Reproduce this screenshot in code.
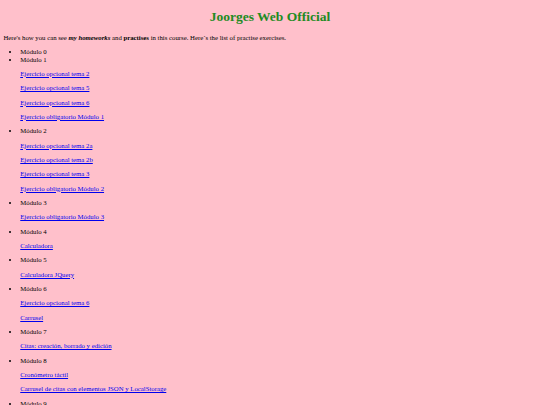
import React from "react";

const modules: { name: string; links: string[] }[] = [
  { name: "Módulo 0", links: [] },
  {
    name: "Módulo 1",
    links: [
      "Ejercicio opcional tema 2",
      "Ejercicio opcional tema 5",
      "Ejercicio opcional tema 6",
      "Ejercicio obligatorio Módulo 1",
    ],
  },
  {
    name: "Módulo 2",
    links: [
      "Ejercicio opcional tema 2a",
      "Ejercicio opcional tema 2b",
      "Ejercicio opcional tema 3",
      "Ejercicio obligatorio Módulo 2",
    ],
  },
  { name: "Módulo 3", links: ["Ejercicio obligatorio Módulo 3"] },
  { name: "Módulo 4", links: ["Calculadora"] },
  { name: "Módulo 5", links: ["Calculadora JQuery"] },
  { name: "Módulo 6", links: ["Ejercicio opcional tema 6", "Carrusel"] },
  { name: "Módulo 7", links: ["Citas: creación, borrado y edición"] },
  {
    name: "Módulo 8",
    links: ["Cronómetro táctil", "Carrusel de citas con elementos JSON y LocalStorage"],
  },
  { name: "Módulo 9", links: [] },
];

export default function App() {
  return (
    <div className="min-h-[405px] bg-[#ffc0cb] px-[3.375px] py-[3.375px] font-['Liberation_Serif',serif] text-[6.75px] leading-[7.6px] text-black">
      <h1 className="mt-[5.7px] mb-[9.05px] text-center text-[13.5px] font-bold leading-[15.5px] text-[#228b22]">
        Joorges Web Official
      </h1>
      <p className="my-[6.75px]">
        Here's how you can see{" "}
        <b>
          <i>my homeworks</i>
        </b>{" "}
        and <b>practises</b> in this course. Here´s the list of practise exercises.
      </p>
      <ul className="my-[6.75px] list-disc pl-[16.875px]">
        {modules.map((m) => (
          <li key={m.name}>
            {m.name}
            {m.links.map((l) => (
              <p key={l} className="my-[6.75px]">
                <a href="#" className="text-[#0000ee] underline">
                  {l}
                </a>
              </p>
            ))}
          </li>
        ))}
      </ul>
    </div>
  );
}
